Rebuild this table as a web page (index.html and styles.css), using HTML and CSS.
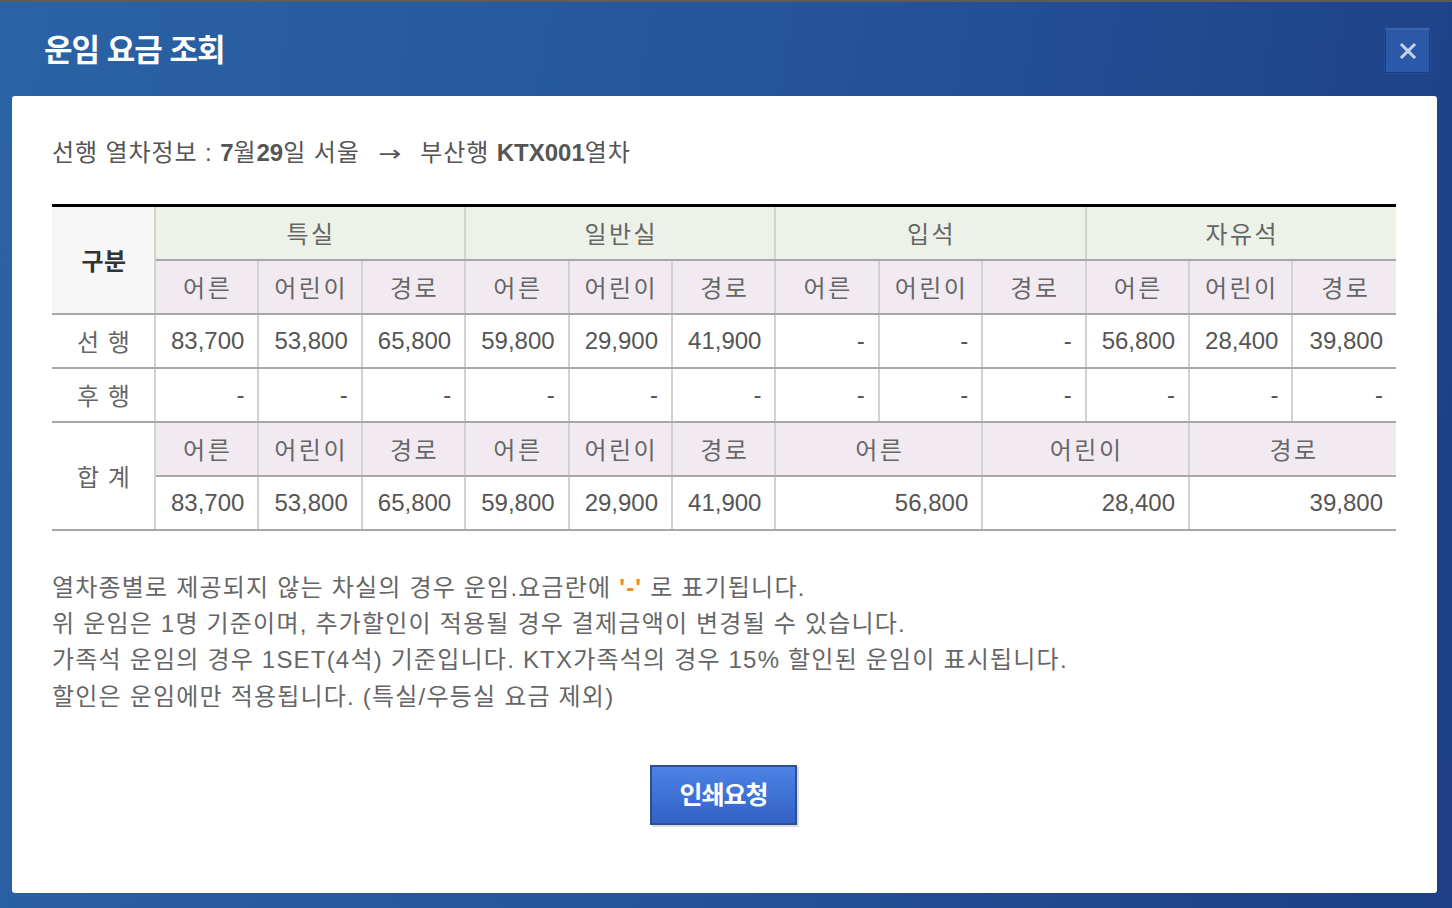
FILE: index.html
```html
<!DOCTYPE html>
<html lang="ko">
<head>
<meta charset="utf-8">
<title>운임 요금 조회</title>
<link rel="stylesheet" href="styles.css">
</head>
<body>
<div class="popup">
  <div class="popup-head">
    <h1 class="popup-title">운임 요금 조회</h1>
    <button class="close-btn" type="button" aria-label="닫기">
      <svg width="18" height="18" viewBox="0 0 18 18"><path d="M3 3 L15 15 M15 3 L3 15" stroke="#c9d3e8" stroke-width="3" stroke-linecap="square"/></svg>
    </button>
  </div>
  <div class="popup-body">
    <p class="train-info">선행 열차정보 : <b>7</b>월<b>29</b>일 서울 <span class="arrow">→</span> 부산행 <b>KTX001</b>열차</p>

    <table class="fare-table">
      <colgroup>
        <col class="c-label">
        <col><col><col><col><col><col><col><col><col><col><col><col>
      </colgroup>
      <tr class="row-group">
        <th rowspan="2" class="th-label">구분</th>
        <th colspan="3">특실</th>
        <th colspan="3">일반실</th>
        <th colspan="3">입석</th>
        <th colspan="3">자유석</th>
      </tr>
      <tr class="row-sub">
        <th>어른</th><th>어린이</th><th>경로</th>
        <th>어른</th><th>어린이</th><th>경로</th>
        <th>어른</th><th>어린이</th><th>경로</th>
        <th>어른</th><th>어린이</th><th>경로</th>
      </tr>
      <tr class="row-data">
        <th class="row-name">선 행</th>
        <td>83,700</td><td>53,800</td><td>65,800</td>
        <td>59,800</td><td>29,900</td><td>41,900</td>
        <td>-</td><td>-</td><td>-</td>
        <td>56,800</td><td>28,400</td><td>39,800</td>
      </tr>
      <tr class="row-data">
        <th class="row-name">후 행</th>
        <td>-</td><td>-</td><td>-</td>
        <td>-</td><td>-</td><td>-</td>
        <td>-</td><td>-</td><td>-</td>
        <td>-</td><td>-</td><td>-</td>
      </tr>
      <tr class="row-sub">
        <th rowspan="2" class="row-name">합 계</th>
        <th>어른</th><th>어린이</th><th>경로</th>
        <th>어른</th><th>어린이</th><th>경로</th>
        <th colspan="2">어른</th><th colspan="2">어린이</th><th colspan="2">경로</th>
      </tr>
      <tr class="row-data row-last">
        <td>83,700</td><td>53,800</td><td>65,800</td>
        <td>59,800</td><td>29,900</td><td>41,900</td>
        <td colspan="2">56,800</td><td colspan="2">28,400</td><td colspan="2">39,800</td>
      </tr>
    </table>

    <ul class="notes">
      <li>열차종별로 제공되지 않는 차실의 경우 운임.요금란에 <span class="dash-mark">'-'</span> 로 표기됩니다.</li>
      <li>위 운임은 1명 기준이며, 추가할인이 적용될 경우 결제금액이 변경될 수 있습니다.</li>
      <li>가족석 운임의 경우 1SET(4석) 기준입니다. KTX가족석의 경우 15% 할인된 운임이 표시됩니다.</li>
      <li>할인은 운임에만 적용됩니다. (특실/우등실 요금 제외)</li>
    </ul>

    <div class="actions">
      <button class="print-btn" type="button">인쇄요청</button>
    </div>
  </div>
</div>
</body>
</html>
```

FILE: styles.css
```css
* { box-sizing: border-box; }
html, body { margin: 0; padding: 0; }
body {
  width: 1452px;
  height: 908px;
  overflow: hidden;
  font-family: "Liberation Sans", "Noto Sans CJK KR", sans-serif;
}
.popup {
  width: 1452px;
  height: 908px;
  display: flex;
  flex-direction: column;
  background: linear-gradient(100deg, #2a63a5 0%, #25549a 50%, #1c3f86 100%);
  border-top: 2px solid #5c5c5c;
  padding: 0 15px 15px 12px;
}
.popup-head {
  height: 94px;
  flex: none;
  display: flex;
  align-items: center;
  justify-content: space-between;
  padding: 0 7px 0 32px;
}
.popup-title {
  margin: 0;
  color: #fff;
  font-family: "Noto Sans CJK KR", sans-serif;
  font-size: 31px;
  font-weight: 700;
  letter-spacing: -1px;
  position: relative;
  top: -2px;
}
.close-btn {
  width: 45px;
  height: 45px;
  padding: 0;
  margin-top: 2px;
  border: 1px solid #1b3f86;
  border-top: 2px solid #3a63ac;
  background: linear-gradient(#2b58a6, #2a5aaa);
  box-shadow: 0 0 0 1px #234b94;
  display: flex;
  align-items: center;
  justify-content: center;
}
.popup-body {
  flex: 1;
  background: #fff;
  border-radius: 3px;
  padding: 39px 40px 0 40px;
  color: #555;
}
.train-info {
  margin: 0 0 32px;
  font-size: 24px;
  line-height: 36px;
  letter-spacing: 0.9px;
  color: #555;
}
.train-info b { font-weight: 700; color: #555; letter-spacing: 0; }
.train-info .arrow {
  display: inline-block;
  margin: 0 12px 0 14px;
  font-family: "DejaVu Sans", sans-serif;
  font-size: 22px;
  transform: scaleX(1.25);
}

.fare-table {
  width: 1344px;
  border-collapse: collapse;
  table-layout: fixed;
  border-top: 3px solid #000;
  border-bottom: 2px solid #a8a8a8;
  font-size: 24px;
  color: #555;
}
.fare-table col.c-label { width: 103px; }
.fare-table th, .fare-table td {
  height: 54px;
  padding: 0 13px;
  border-left: 2px solid #d2d2d2;
  border-right: 2px solid #d2d2d2;
  border-top: 2px solid #a8a8a8;
  border-bottom: 2px solid #a8a8a8;
  font-weight: 400;
  white-space: nowrap;
}
.fare-table th {
  letter-spacing: 2.5px;
  padding: 0 0 0 2px;
}
.fare-table tr > :first-child { border-left: none; }
.fare-table tr > :last-child { border-right: none; }
.fare-table .row-group th {
  background: #ecf2e7;
  color: #666;
  border-top: none;
  height: 54px;
}
.fare-table .row-sub th {
  background: #f1ebf1;
  color: #666;
}
.fare-table .th-label {
  background: #f7f7f7 !important;
  color: #333 !important;
  font-weight: 700;
  letter-spacing: 0.5px;
  border-left: none;
}
.fare-table .row-name {
  background: #fff !important;
  color: #666 !important;
  letter-spacing: 1px;
  border-left: none;
}
.fare-table td {
  text-align: right;
  color: #555;
}
.notes {
  list-style: none;
  margin: 39px 0 0;
  padding: 0;
  font-size: 24px;
  line-height: 36.4px;
  letter-spacing: 1.2px;
  color: #666;
}
.dash-mark {
  color: #f08a1c;
  font-weight: 700;
}
.actions {
  display: flex;
  justify-content: center;
  margin-top: 50px;
  padding-right: 2px;
}
.print-btn {
  width: 147px;
  height: 60px;
  border: 2px solid #2a4f98;
  background: linear-gradient(#4d82e4, #3361c6);
  box-shadow: 2px 2px 0 #dcdcdc;
  color: #fff;
  font-family: "Noto Sans CJK KR", sans-serif;
  font-size: 25px;
  font-weight: 700;
  letter-spacing: -1px;
  padding: 0 0 4px;
}
```
